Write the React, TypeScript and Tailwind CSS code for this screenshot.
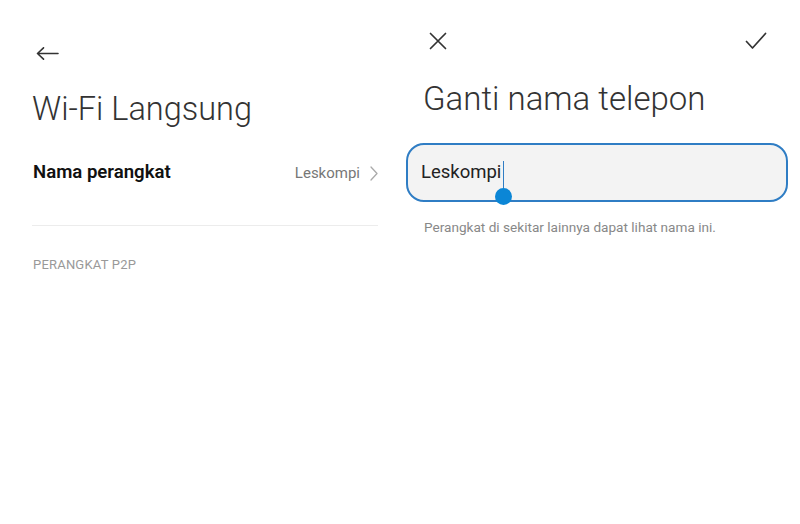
export default function App() {
  return (
    <div className="flex h-[524px] w-[800px] bg-white font-['Roboto',sans-serif] text-[#333]">
      {/* Wi-Fi Direct screen */}
      <section className="w-[400px] pl-[32px] pr-[22px]">
        <div className="flex h-[60px] items-end pl-[4px]">
          <svg width="23" height="13" viewBox="0 0 23 13" fill="none" stroke="#333" strokeWidth="1.6" strokeLinecap="round" strokeLinejoin="round">
            <path d="M22 6.5H1.5M7.5 0.8L1.5 6.5l6 5.7" />
          </svg>
        </div>
        <h1 className="mt-[29px] text-[32.5px] font-light leading-[40px] text-[#333]">Wi-Fi Langsung</h1>
        <div className="mt-[27px] flex h-[34px] items-center justify-between">
          <span className="pl-px text-[18.6px] font-semibold text-[#111]">Nama perangkat</span>
          <div className="flex items-center gap-[10px]">
            <span className="text-[15px] text-[#777]">Leskompi</span>
            <svg width="8" height="15" viewBox="0 0 8 15" fill="none" stroke="#aaa" strokeWidth="1.3" strokeLinecap="round" strokeLinejoin="round">
              <path d="M1 1l6 6.5L1 14" />
            </svg>
          </div>
        </div>
        <div className="mt-[35px] h-px bg-[#ececec]" />
        <p className="mt-[29px] pl-px text-[13px] uppercase tracking-[0.2px] text-[#999]">Perangkat P2P</p>
      </section>

      {/* Rename dialog */}
      <section className="w-[400px] pl-[6px] pr-[12px]">
        <div className="flex h-[82px] items-center justify-between pl-[23px] pr-[21px]">
          <svg width="18" height="18" viewBox="0 0 18 18" fill="none" stroke="#333" strokeWidth="1.7" strokeLinecap="round">
            <path d="M1.5 1.5l15 15M16.5 1.5l-15 15" />
          </svg>
          <svg width="22" height="18" viewBox="0 0 22 18" fill="none" stroke="#333" strokeWidth="1.7" strokeLinecap="round" strokeLinejoin="round">
            <path d="M1.5 9.5l6 6.5L20.5 1.5" />
          </svg>
        </div>
        <h2 className="ml-[17px] mt-[-3px] text-[33px] font-light leading-[40px] text-[#333]">Ganti nama telepon</h2>
        <div className="relative mt-[24px] flex h-[59px] items-center rounded-[18px] border-2 border-[#2f7dc4] bg-[#f3f3f3] pl-[13px]">
          <span className="text-[18.5px] text-[#222]">Leskompi</span>
          <span className="absolute left-[95px] top-[16px] h-[31px] w-px bg-[#2f7dc4]" />
          <span className="absolute left-[87px] top-[43px] h-[17px] w-[17px] rounded-full bg-[#0b86d6]" />
        </div>
        <p className="ml-[18px] mt-[15px] text-[13.6px] text-[#888]">Perangkat di sekitar lainnya dapat lihat nama ini.</p>
      </section>
    </div>
  )
}
